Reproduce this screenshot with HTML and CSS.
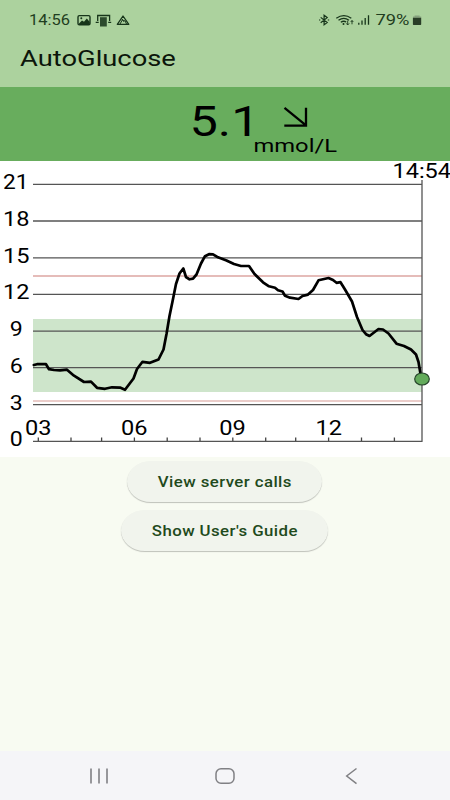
FILE: index.html
```html
<!DOCTYPE html>
<html lang="en">
<head>
<meta charset="utf-8">
<title>AutoGlucose</title>
<link rel="stylesheet" href="styles.css">
</head>
<body>
<header class="top">
  <div class="status">
    <div class="status-left">
      <svg width="112" height="18" viewBox="28 11 112 18">
        <text class="status-text" x="29" y="25" textLength="41" lengthAdjust="spacingAndGlyphs">14:56</text>
        <rect x="78" y="15.6" width="12" height="9.2" rx="1.3" fill="none" stroke="#17351a" stroke-width="1.4"/>
        <path d="M79 23.5l3-3 2 1.3 2.8-3.3 3 3.5v2.5H79z" fill="#17351a"/><circle cx="81.3" cy="18.3" r="1" fill="#17351a"/>
        <path d="M97.7 21V15.5h11.9V21M95.7 22.4h3M108.2 22.4h3" fill="none" stroke="#17351a" stroke-width="1.3"/>
        <path d="M100 17.2h6.8v9.3H100z" fill="#2c4a2d"/>
        <path d="M117.3 24.3L123 16l5.8 8.3z" fill="none" stroke="#17351a" stroke-width="1.3" stroke-linejoin="round"/>
        <path d="M120 24l2.6-4.5 1 2 1.3-1 1.6 3.5M121.6 18.8l2.2 2.3" fill="none" stroke="#17351a" stroke-width="1"/>
      </svg>
    </div>
    <svg width="108" height="18" viewBox="316 11 108 18">
      <path d="M320.7 17.4l6.5 5.1-3.1 2.4v-9.6l3.1 2.3-6.5 5.1M319 20h1.3M327.8 20h1.4" fill="none" stroke="#17351a" stroke-width="1.2"/>
      <path d="M336.3 18.2q7.6-5.2 15 0M338.5 20.3q5.3-3.7 10.5 0M340.8 22.2q2.9-1.8 5.4-.2" fill="none" stroke="#17351a" stroke-width="1.3"/>
      <circle cx="343.5" cy="24" r="1" fill="#17351a"/>
      <path d="M347.7 20.6v4.2M346.3 23.4l1.4 1.6 1.4-1.6M352 24.3v-3.8M350.7 22l1.3-1.5 1.3 1.5" fill="none" stroke="#17351a" stroke-width=".9"/>
      <path d="M358.8 22.7v2.1M362 20.5v4.3M365.2 18v6.8M368.5 15.3v9.5" stroke="#17351a" stroke-width="1.3"/>
      <text class="status-text" x="375.5" y="25" textLength="34" lengthAdjust="spacingAndGlyphs">79%</text>
      <path d="M413 17.8v-1.3h1.6v-1h5v1h1.6v1.3z" fill="#86a17f"/>
      <path d="M412.9 17.8h8.3v6.4q0 .7-.7.7h-6.9q-.7 0-.7-.7z" fill="#293d27"/>
    </svg>
  </div>
  <h1 class="title">AutoGlucose</h1>
</header>
<section class="reading">
  <svg width="150" height="74" viewBox="190 87 150 74">
    <text class="value" x="189.5" y="135.5" textLength="70" lengthAdjust="spacingAndGlyphs">5.1</text>
    <path d="M284.5 107.9L306 125.3M306 107.7v18h-21.7" fill="none" stroke="#000" stroke-width="2.3"/>
    <text class="unit" x="253.5" y="152" textLength="83.5" lengthAdjust="spacingAndGlyphs">mmol/L</text>
  </svg>
</section>
<section class="chart">
  <svg width="450" height="296" viewBox="0 161 450 296">
    <rect x="33" y="319" width="389" height="73" fill="#cee5cb"/>
    <path d="M33 276H422" stroke="#dca6a2" stroke-width="1.3"/>
    <path d="M33 401H422" stroke="#e4bcb9" stroke-width="1.6"/>
    <path class="grid" d="M33 184.3H422M33 221H422M33 257.8H422M33 294.4H422M33 331.2H422M33 367.7H422M33 404.6H422M33 441.3H422.6M422 180V441"/>
    <path class="ticks" d="M38.3 437.5v3.5M71 437.5v3.5M101.6 437.5v3.5M134.4 437.5v3.5M167.2 437.5v3.5M200 437.5v3.5M232.8 437.5v3.5M265.7 437.5v3.5M295.7 437.5v3.5M328.6 437.5v3.5M361.5 437.5v3.5M394.4 437.5v3.5"/>
    <g class="labels">
      <text x="3" y="189.3" textLength="25.5" lengthAdjust="spacingAndGlyphs">21</text>
      <text x="3" y="226" textLength="26.5" lengthAdjust="spacingAndGlyphs">18</text>
      <text x="3" y="262.7" textLength="26.5" lengthAdjust="spacingAndGlyphs">15</text>
      <text x="3" y="299.4" textLength="26.5" lengthAdjust="spacingAndGlyphs">12</text>
      <text x="9.8" y="336" textLength="13" lengthAdjust="spacingAndGlyphs">9</text>
      <text x="9.8" y="372.8" textLength="13" lengthAdjust="spacingAndGlyphs">6</text>
      <text x="9.8" y="409.5" textLength="13" lengthAdjust="spacingAndGlyphs">3</text>
      <text x="9.8" y="446" textLength="13" lengthAdjust="spacingAndGlyphs">0</text>
      <text x="25" y="434.5" textLength="26.5" lengthAdjust="spacingAndGlyphs">03</text>
      <text x="121" y="434.5" textLength="26.5" lengthAdjust="spacingAndGlyphs">06</text>
      <text x="219.3" y="434.5" textLength="26.5" lengthAdjust="spacingAndGlyphs">09</text>
      <text x="315.5" y="434.5" textLength="26.5" lengthAdjust="spacingAndGlyphs">12</text>
      <text x="392.5" y="178.3" textLength="58.5" lengthAdjust="spacingAndGlyphs">14:54</text>
    </g>
    <path class="trace" d="M33.8 365L37 364.2H46L49 369.2L54 370L60 370.3L67 369.7L74 375.7L84 382L91 381.6L97 387.8L105 388.8L112 387.3L120 387.6L125 389.8L133.5 378.5L137 369L142.5 361.8L150 362.8L158.5 359.5L163.5 349.5L166.5 334L169.5 316L172.5 301.5L176 284L179.5 273.5L183.3 268.5L186 277L189.5 279.3L193 278.6L196.5 274.5L201 263.5L205 256.2L209 254.2L213 254.3L218 257.3L226.5 260.5L234 264L241 266L249 266L254.5 274L263 282.3L269 286.3L275 287.8L278 290.3L282.5 291.5L285 295.8L290 297.7L298.5 299L302.5 296L308 294.6L313 290L318.5 280.3L323 279.3L328.5 278L333 280L336.5 282.8L340.5 282.2L345 289.5L352 301.5L357 317L362.5 330L366 334.2L369.5 336L374 332.5L378.5 329L383 329.5L388.5 333.5L396.5 343.7L404 346L411 349.5L416 354.5L418.5 362L420.7 375"/>
    <ellipse cx="422" cy="379" rx="7.3" ry="6" fill="#63ab5b" stroke="#26452a" stroke-width="1.2"/>
  </svg>
</section>
<main class="actions">
  <button class="btn btn-calls"><span class="btn-label">View server calls</span></button>
  <button class="btn btn-guide"><span class="btn-label">Show User's Guide</span></button>
</main>
<nav class="navbar">
  <svg width="22" height="20" viewBox="88 766 22 20"><path d="M91 768.5v15M99 768.5v15M107 768.5v15" stroke="#808084" stroke-width="1.6"/></svg>
  <svg width="22" height="20" viewBox="214 766 22 20"><rect x="216" y="768.7" width="18" height="14.5" rx="5" fill="none" stroke="#808084" stroke-width="1.5"/></svg>
  <svg width="22" height="20" viewBox="340 766 22 20"><path d="M356.5 768.5L346.7 776l9.8 7.7" fill="none" stroke="#808084" stroke-width="1.5"/></svg>
</nav>
</body>
</html>
```
FILE: styles.css
```css
* { box-sizing: border-box; }
body {
  margin: 0;
  width: 450px;
  height: 800px;
  display: flex;
  flex-direction: column;
  background: #f8fbf2;
  font-family: Roboto, "Liberation Sans", sans-serif;
  overflow: hidden;
}
svg { display: block; overflow: visible; }
.top { height: 87px; background: #acd29e; }
.status {
  display: flex;
  justify-content: space-between;
  padding: 11px 26px 0 28px;
}
.status-text { font-size: 14px; fill: #1f3d20; }
.title {
  margin: 16px 0 0 19.8px;
  width: max-content;
  font-size: 22.5px;
  line-height: 26px;
  font-weight: 400;
  color: #0c160b;
  transform: scaleX(1.215);
  transform-origin: left;
}
.reading {
  height: 74px;
  padding-left: 190px;
  background: #68ad5d;
}
.value { font-size: 43px; }
.unit { font-size: 19px; }
.chart { height: 296px; background: #fff; }
.grid { fill: none; stroke: #555; stroke-width: 1.3; }
.ticks { fill: none; stroke: #444; stroke-width: 1.3; }
.labels { font-size: 20px; fill: #000; }
.trace {
  fill: none;
  stroke: #000;
  stroke-width: 2.7;
  stroke-linejoin: round;
  stroke-linecap: round;
}
.actions {
  flex: 1;
  display: flex;
  flex-direction: column;
  align-items: center;
  gap: 8px;
  padding: 4px 1px 0 0;
}
.btn {
  height: 41px;
  padding: 0;
  border: 0;
  border-radius: 24px / 20.5px;
  background: #f1f4ed;
  box-shadow: 0 1px 1px rgba(0, 0, 0, .23);
  font-family: inherit;
  font-size: 14px;
  font-weight: 500;
  letter-spacing: .35px;
  color: #1f4a1c;
}
.btn-calls { width: 195px; }
.btn-guide { width: 207px; }
.btn-label { display: inline-block; white-space: nowrap; transform: scaleX(1.2); }
.navbar {
  height: 49px;
  display: flex;
  justify-content: space-between;
  align-items: center;
  padding: 1px 88px 0;
  background: #f5f5f8;
}
```
